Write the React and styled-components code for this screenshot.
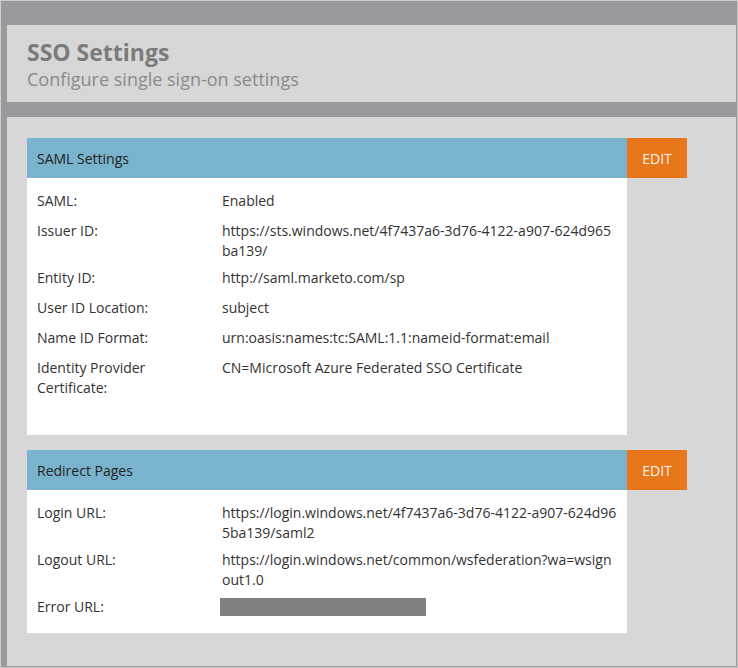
import React from "react";
import styled, { createGlobalStyle } from "styled-components";

const Global = createGlobalStyle`
  html, body { margin: 0; padding: 0; background: #d7d7d7; }
  body { font-family: "Open Sans", "Noto Sans", sans-serif; }
  * { box-sizing: border-box; }
`;

const Frame = styled.div`
  width: 738px;
  height: 668px;
  background: #9a999e;
  border-top: 1px solid #cfcfcf;
  border-left: 1px solid #cfcfcf;
  border-right: 1px solid #c4c4c4;
  border-bottom: 1px solid #c4c4c4;
  padding: 24px 1px 1px 6px;
  display: flex;
  flex-direction: column;
  gap: 15px;
  overflow: hidden;
`;

const Header = styled.header`
  flex-shrink: 0;
  background: #d7d7d7;
  height: 77px;
  padding: 12px 20px 0;
`;

const Title = styled.h1`
  margin: 0;
  font-size: 23px;
  line-height: 30px;
  font-weight: 700;
  color: #7b7b7b;
`;

const Subtitle = styled.p`
  margin: 0;
  font-size: 18px;
  line-height: 24px;
  color: #8a8a8a;
`;

const Content = styled.main`
  flex: 1;
  background: #d7d7d7;
  padding: 21px 20px;
  display: flex;
  flex-direction: column;
  gap: 15px;
`;

const Card = styled.section`
  width: 660px;
`;

const CardHead = styled.div`
  display: flex;
  height: 40px;
`;

const CardTitle = styled.div`
  width: 600px;
  background: #7ab3cd;
  color: #222;
  font-size: 14px;
  display: flex;
  align-items: center;
  padding-left: 10px;
`;

const EditButton = styled.button`
  width: 60px;
  border: none;
  background: #e8761a;
  color: #fff6e6;
  font-family: inherit;
  font-size: 14px;
  cursor: pointer;
  padding: 0;
`;

const CardBody = styled.div`
  width: 600px;
  background: #fff;
  padding: 8.5px 10px ${(p) => p.$bottom}px;
`;

const Row = styled.div`
  display: grid;
  grid-template-columns: 185px 400px;
  align-items: start;
  min-height: 30px;
  padding: ${(p) => (p.$single ? "4px 0 3px" : "4.5px 0 2.5px")};
  font-size: 14px;
  line-height: 20px;
  color: #333;
`;

const Label = styled.div`
  padding-right: 12px;
`;

const Value = styled.div`
  word-break: break-all;
  padding-right: 4px;
`;

const Redacted = styled.span`
  display: inline-block;
  width: 206px;
  height: 18px;
  margin-left: -2px;
  vertical-align: top;
  margin-top: 1px;
  background: #808080;
`;

const saml = [
  ["SAML:", "Enabled", true],
  ["Issuer ID:", "https://sts.windows.net/4f7437a6-3d76-4122-a907-624d965ba139/", false],
  ["Entity ID:", "http://saml.marketo.com/sp", true],
  ["User ID Location:", "subject", true],
  ["Name ID Format:", "urn:oasis:names:tc:SAML:1.1:nameid-format:email", true],
  ["Identity Provider Certificate:", "CN=Microsoft Azure Federated SSO Certificate", false],
];

const redirect = [
  ["Login URL:", "https://login.windows.net/4f7437a6-3d76-4122-a907-624d965ba139/saml2", false],
  ["Logout URL:", "https://login.windows.net/common/wsfederation?wa=wsignout1.0", false],
  ["Error URL:", null, true],
];

function Section({ title, rows, bottom }) {
  return (
    <Card>
      <CardHead>
        <CardTitle>{title}</CardTitle>
        <EditButton>EDIT</EditButton>
      </CardHead>
      <CardBody $bottom={bottom}>
        {rows.map(([l, v, single]) => (
          <Row key={l} $single={single}>
            <Label>{l}</Label>
            <Value>{v === null ? <Redacted /> : v}</Value>
          </Row>
        ))}
      </CardBody>
    </Card>
  );
}

export default function App() {
  return (
    <>
      <Global />
      <Frame>
        <Header>
          <Title>SSO Settings</Title>
          <Subtitle>Configure single sign-on settings</Subtitle>
        </Header>
        <Content>
          <Section title="SAML Settings" rows={saml} bottom={34.5} />
          <Section title="Redirect Pages" rows={redirect} bottom={10.5} />
        </Content>
      </Frame>
    </>
  );
}
